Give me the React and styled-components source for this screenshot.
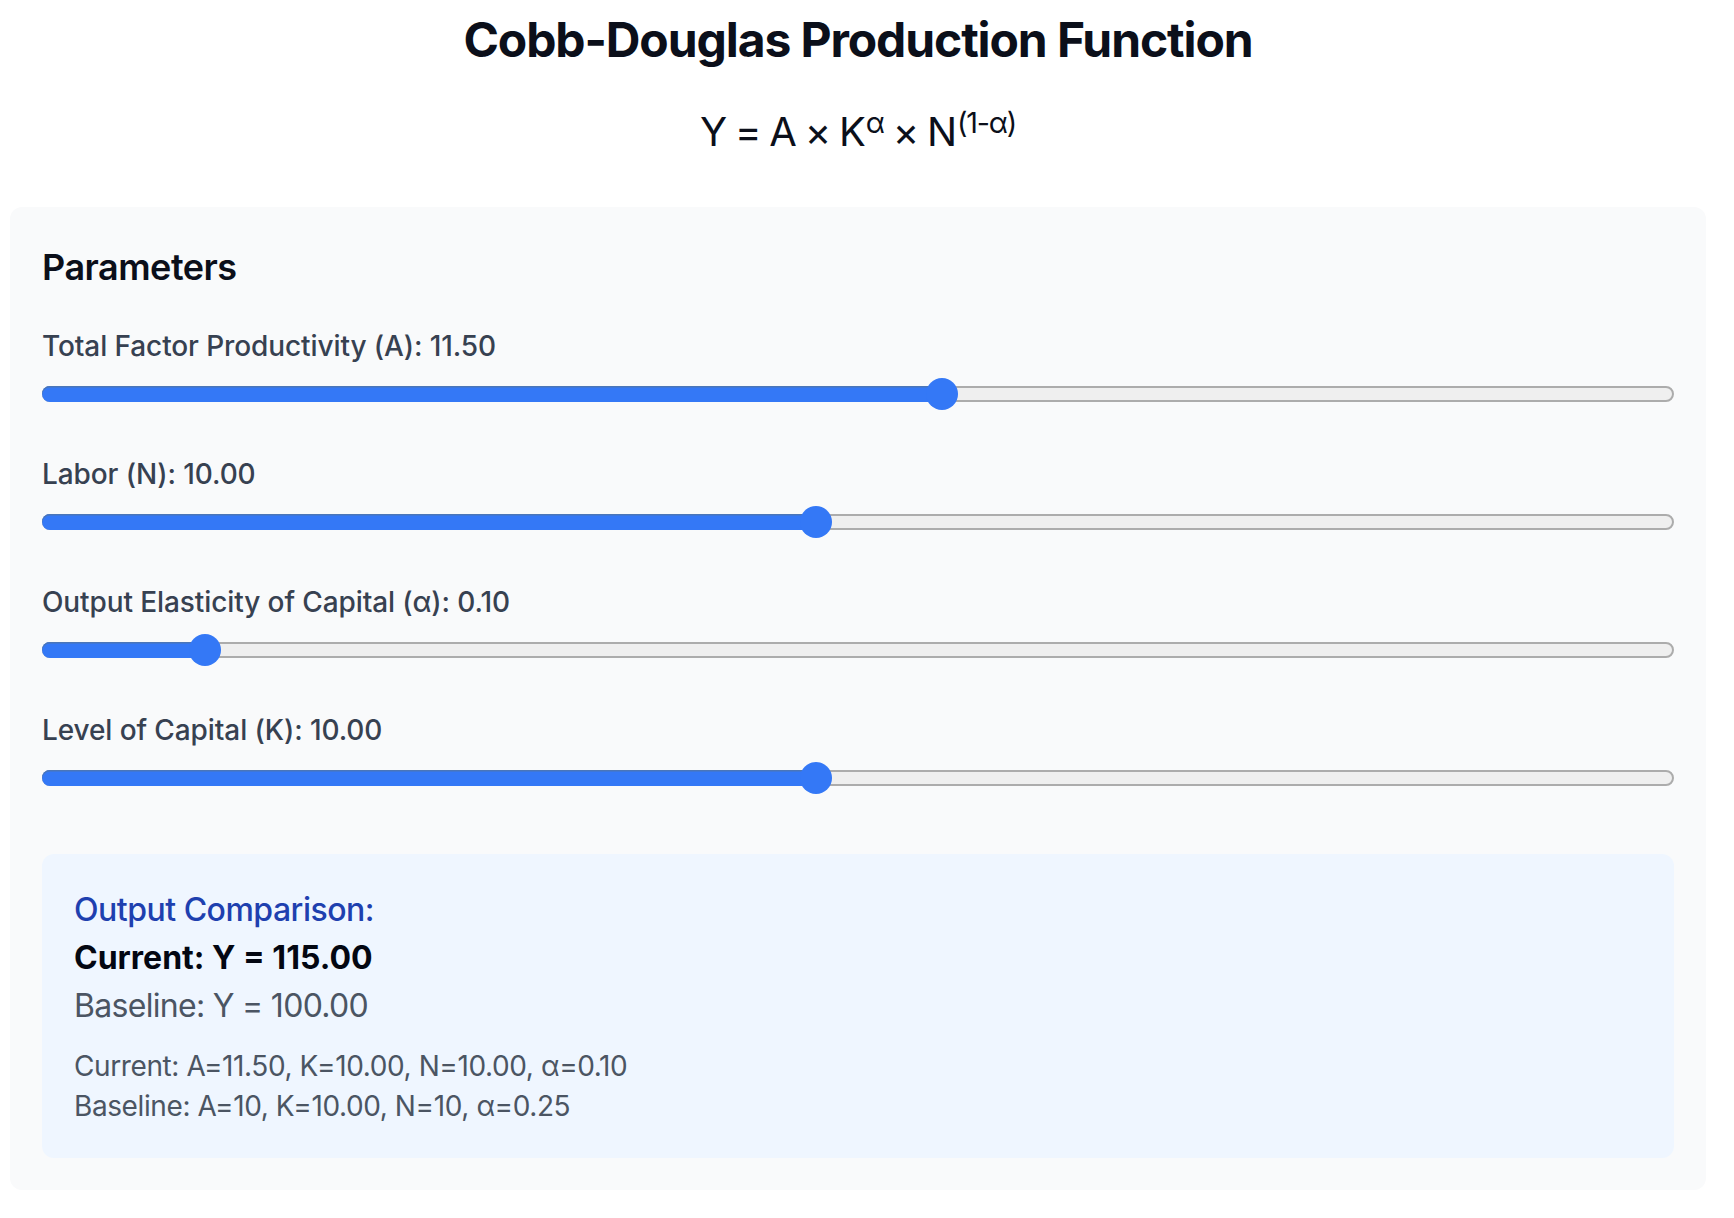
import React from "react";
import styled, { createGlobalStyle } from "styled-components";

const Global = createGlobalStyle`
  html, body { margin: 0; padding: 0; background: #ffffff; }
  body { font-family: Inter, "Noto Sans", "Liberation Sans", sans-serif; -webkit-font-smoothing: antialiased; }
  * { box-sizing: border-box; }
`;

const Page = styled.div`
  width: 1696px;
  margin-left: 10px;
  padding-top: 8px;
`;

const Title = styled.h1`
  margin: 0 0 32px;
  font-size: 48px;
  line-height: 64px;
  font-weight: 700;
  color: #0b0f1a;
  text-align: center;
  letter-spacing: -1.1px;
`;

const Formula = styled.div`
  margin: 0 0 47px;
  font-size: 40px;
  line-height: 56px;
  font-weight: 400;
  color: #0b0f1a;
  text-align: center;
  letter-spacing: -1.2px;
  word-spacing: -1px;
`;

const Sup = styled.sup`
  font-size: 72%;
  line-height: 0;
  position: relative;
  vertical-align: baseline;
  top: -0.45em;
  margin-left: 1px;
`;

const Panel = styled.section`
  background: #f9fafb;
  border-radius: 12px;
  padding: 32px;
`;

const PanelTitle = styled.h2`
  margin: 0 0 31px;
  font-size: 36px;
  line-height: 56px;
  font-weight: 600;
  color: #0b0f1a;
  letter-spacing: -0.5px;
`;

const Row = styled.div`
  margin-bottom: ${(p) => (p.$last ? 0 : 44)}px;
`;

const Label = styled.label`
  display: block;
  margin-bottom: 12px;
  font-size: 28px;
  line-height: 40px;
  font-weight: 500;
  color: #374151;
  letter-spacing: -0.1px;
`;

const SliderArea = styled.div`
  position: relative;
  height: 32px;
  display: flex;
  align-items: center;
`;

const Track = styled.div`
  width: 100%;
  height: 16px;
  border-radius: 8px;
  background: #efefef;
  border: 2px solid #acacac;
`;

const Fill = styled.div`
  position: absolute;
  left: 0;
  top: 8px;
  height: 16px;
  border-radius: 8px 0 0 8px;
  background: #3478f6;
  box-shadow: inset 0 1.5px 0 #4b76b8;
`;

const Thumb = styled.div`
  position: absolute;
  top: 0;
  width: 32px;
  height: 32px;
  border-radius: 50%;
  background: #3478f6;
`;

const OutputBox = styled.div`
  margin-top: 60px;
  background: #eff6ff;
  border-radius: 12px;
  padding: 32px;
`;

const OutputHeading = styled.div`
  font-size: 32px;
  line-height: 48px;
  font-weight: 500;
  color: #1e40af;
  letter-spacing: -0.5px;
`;

const OutputLine = styled.div`
  font-size: 32px;
  line-height: 48px;
  font-weight: ${(p) => (p.$strong ? 700 : 400)};
  color: ${(p) => (p.$strong ? "#030712" : "#4b5563")};
  letter-spacing: ${(p) => (p.$strong ? "0px" : "-0.7px")};
`;

const Details = styled.div`
  margin-top: 16px;
  font-size: 28px;
  line-height: 40px;
  color: #4b5563;
  letter-spacing: -0.4px;
`;

function Slider({ value, min, max }) {
  const frac = (value - min) / (max - min);
  return (
    <SliderArea>
      <Track />
      <Fill style={{ width: `calc(16px + ${frac} * (100% - 32px))` }} />
      <Thumb style={{ left: `calc(${frac} * (100% - 32px))` }} />
    </SliderArea>
  );
}

const params = [
  { label: "Total Factor Productivity (A)", value: 11.5, min: 1, max: 20 },
  { label: "Labor (N)", value: 10, min: 1, max: 20 },
  { label: "Output Elasticity of Capital (α)", value: 0.1, min: 0.01, max: 0.99 },
  { label: "Level of Capital (K)", value: 10, min: 1, max: 20 },
];

export default function App() {
  return (
    <>
      <Global />
      <Page>
        <Title>Cobb-Douglas Production Function</Title>
        <Formula>
          Y = A × K<Sup>α</Sup> × N<Sup>(1-α)</Sup>
        </Formula>
        <Panel>
          <PanelTitle>Parameters</PanelTitle>
          {params.map((p, i) => (
            <Row key={p.label} $last={i === params.length - 1}>
              <Label>
                {p.label}: {p.value.toFixed(2)}
              </Label>
              <Slider value={p.value} min={p.min} max={p.max} />
            </Row>
          ))}
          <OutputBox>
            <OutputHeading>Output Comparison:</OutputHeading>
            <OutputLine $strong>Current: Y = 115.00</OutputLine>
            <OutputLine>Baseline: Y = 100.00</OutputLine>
            <Details>
              <div>Current: A=11.50, K=10.00, N=10.00, α=0.10</div>
              <div>Baseline: A=10, K=10.00, N=10, α=0.25</div>
            </Details>
          </OutputBox>
        </Panel>
      </Page>
    </>
  );
}
